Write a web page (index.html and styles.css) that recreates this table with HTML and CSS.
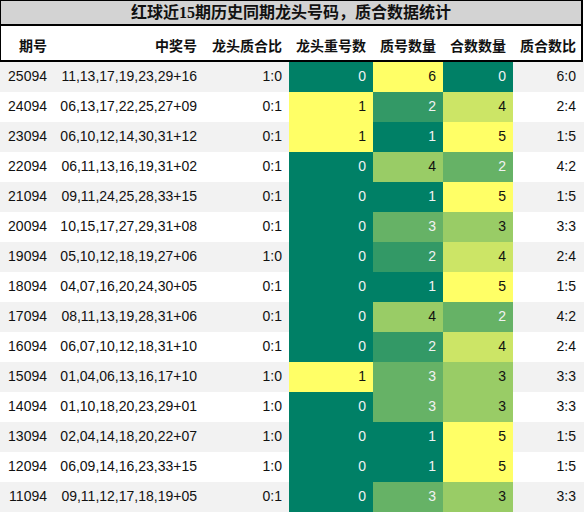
FILE: index.html
```html
<!DOCTYPE html>
<html lang="zh">
<head>
<meta charset="utf-8">
<title>红球近15期历史同期龙头号码，质合数据统计</title>
<link rel="stylesheet" href="styles.css">
</head>
<body>
<div class="sheet">
  <div class="title">红球近15期历史同期龙头号码，质合数据统计</div>
  <div class="head">
    <div>期号</div><div>中奖号</div><div>龙头质合比</div><div>龙头重号数</div><div>质号数量</div><div>合数数量</div><div>质合数比</div>
  </div>
  <div class="row alt"><div>25094</div><div>11,13,17,19,23,29+16</div><div>1:0</div><div class="c0">0</div><div class="c5">6</div><div class="c0">0</div><div>6:0</div></div>
  <div class="row"><div>24094</div><div>06,13,17,22,25,27+09</div><div>0:1</div><div class="c5">1</div><div class="c1">2</div><div class="c4">4</div><div>2:4</div></div>
  <div class="row alt"><div>23094</div><div>06,10,12,14,30,31+12</div><div>0:1</div><div class="c5">1</div><div class="c0">1</div><div class="c5">5</div><div>1:5</div></div>
  <div class="row"><div>22094</div><div>06,11,13,16,19,31+02</div><div>0:1</div><div class="c0">0</div><div class="c3">4</div><div class="c2">2</div><div>4:2</div></div>
  <div class="row alt"><div>21094</div><div>09,11,24,25,28,33+15</div><div>0:1</div><div class="c0">0</div><div class="c0">1</div><div class="c5">5</div><div>1:5</div></div>
  <div class="row"><div>20094</div><div>10,15,17,27,29,31+08</div><div>0:1</div><div class="c0">0</div><div class="c2">3</div><div class="c3">3</div><div>3:3</div></div>
  <div class="row alt"><div>19094</div><div>05,10,12,18,19,27+06</div><div>1:0</div><div class="c0">0</div><div class="c1">2</div><div class="c4">4</div><div>2:4</div></div>
  <div class="row"><div>18094</div><div>04,07,16,20,24,30+05</div><div>0:1</div><div class="c0">0</div><div class="c0">1</div><div class="c5">5</div><div>1:5</div></div>
  <div class="row alt"><div>17094</div><div>08,11,13,19,28,31+06</div><div>0:1</div><div class="c0">0</div><div class="c3">4</div><div class="c2">2</div><div>4:2</div></div>
  <div class="row"><div>16094</div><div>06,07,10,12,18,31+10</div><div>0:1</div><div class="c0">0</div><div class="c1">2</div><div class="c4">4</div><div>2:4</div></div>
  <div class="row alt"><div>15094</div><div>01,04,06,13,16,17+10</div><div>1:0</div><div class="c5">1</div><div class="c2">3</div><div class="c3">3</div><div>3:3</div></div>
  <div class="row"><div>14094</div><div>01,10,18,20,23,29+01</div><div>1:0</div><div class="c0">0</div><div class="c2">3</div><div class="c3">3</div><div>3:3</div></div>
  <div class="row alt"><div>13094</div><div>02,04,14,18,20,22+07</div><div>1:0</div><div class="c0">0</div><div class="c0">1</div><div class="c5">5</div><div>1:5</div></div>
  <div class="row"><div>12094</div><div>06,09,14,16,23,33+15</div><div>1:0</div><div class="c0">0</div><div class="c0">1</div><div class="c5">5</div><div>1:5</div></div>
  <div class="row alt"><div>11094</div><div>09,11,12,17,18,19+05</div><div>0:1</div><div class="c0">0</div><div class="c2">3</div><div class="c3">3</div><div>3:3</div></div>
</div>
</body>
</html>
```
FILE: styles.css
```css
html, body {
  margin: 0;
  padding: 0;
  background: #ffffff;
}

.sheet {
  width: 584px;
  font-family: "Liberation Sans", "Noto Sans CJK SC", sans-serif;
  font-size: 14px;
  color: #111111;
}

.title {
  box-sizing: border-box;
  width: 583px;
  height: 26px;
  border: 1px solid #000000;
  border-right-width: 2px;
  border-bottom-width: 2px;
  background: #d3d3d3;
  text-align: center;
  font-family: "Liberation Serif", "Noto Sans CJK SC", serif;
  font-weight: 700;
  font-size: 16px;
  line-height: 23px;
  color: #111111;
}

.head {
  box-sizing: border-box;
  width: 583px;
  height: 36px;
  display: grid;
  grid-template-columns: 53px 150px 85px 84px 70px 70px 68px;
  border-left: 1px solid #000000;
  border-right: 2px solid #000000;
  border-bottom: 2px solid #000000;
  font-weight: 700;
  font-family: "Noto Sans CJK SC", sans-serif;
  font-size: 14px;
}

.head > div {
  text-align: right;
  padding: 4px 7px 0 0;
  line-height: 30px;
}

.head > div:last-child {
  padding-right: 5px;
}

.row {
  display: grid;
  grid-template-columns: 54px 150px 85px 84px 70px 70px 71px;
  height: 30px;
}

.row.alt {
  background: #f2f2f2;
}

.row > div {
  text-align: right;
  padding-right: 7px;
  line-height: 29px;
  white-space: nowrap;
}

.row > div:last-child {
  padding-right: 8px;
}

.c0 { background: #008066; color: #f2f2f2; }
.c1 { background: #339966; color: #f2f2f2; }
.c2 { background: #66b266; color: #f2f2f2; }
.c3 { background: #99cc66; color: #111111; }
.c4 { background: #cce566; color: #111111; }
.c5 { background: #ffff66; color: #111111; }
```
